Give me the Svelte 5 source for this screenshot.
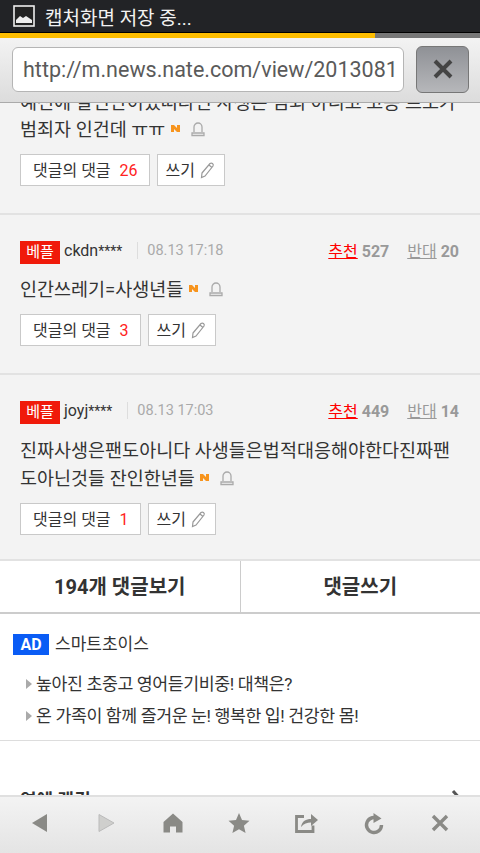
<script>
  const comments = [
    { id: 'first', lines: ['범죄자 인건데 ㅠㅠ'], replies: 26 },
    { id: 'a', best: true, user: 'ckdn', date: '08.13 17:18', up: 527, down: 20, lines: ['인간쓰레기=사생년들'], replies: 3 },
    { id: 'b', best: true, user: 'joyj', date: '08.13 17:03', up: 449, down: 14, lines: ['진짜사생은팬도아니다 사생들은법적대응해야한다진짜팬', '도아닌것들 잔인한년들'], replies: 1 }
  ];
  const ads = ['높아진 초중고 영어듣기비중! 대책은?', '온 가족이 함께 즐거운 눈! 행복한 입! 건강한 몸!'];
</script>

<div class="screen">
  <div class="status">
    <svg class="pic" width="22" height="22" viewBox="0 0 22 22">
      <rect x="1" y="1" width="20" height="20" fill="#222" stroke="#eee" stroke-width="1.6" />
      <path d="M3 18v-3l4-4 3 2 3-2 3 2 3 2v3z" fill="#eee" />
    </svg>
    <span>캡처화면 저장 중...</span>
  </div>
  <div class="progress"><div class="fill"></div></div>

  <div class="urlbar">
    <div class="url">http://m.news.nate.com/view/2013081</div>
    <div class="stop">
      <svg width="24" height="24" viewBox="0 0 24 24"><path d="M4 4l16 16M20 4L4 20" stroke="#444" stroke-width="4" /></svg>
    </div>
  </div>

  <div class="page">
    <div class="scroll">
      <p class="cut">예전에 살인난이었떠라면 사생은 범죄 아니고 고용 르노가</p>
      {#each comments as c}
        <div class="comment {c.id}">
          {#if c.best}
            <div class="head">
              <span class="best">베플</span>
              <span class="user">{c.user}<em>****</em></span>
              <span class="date">{c.date}</span>
              <span class="votes">
                <u class="up">추천</u> <b>{c.up}</b>
                <u class="down">반대</u> <b>{c.down}</b>
              </span>
            </div>
          {/if}
          <div class="body">
            {#each c.lines as line, i}
              <div>
                {line}
                {#if i === c.lines.length - 1}
                  <svg class="new" width="9" height="9" viewBox="0 0 9 9"><path d="M0 1h3l3 3V1h3v7H6L3 5v3H0z" fill="#f7941d" /></svg>
                  <svg class="bell" width="14" height="15" viewBox="0 0 14 15"><path d="M3 10V5a4 4 0 0 1 8 0v5M1 13.5h12v-2.500H1z" fill="none" stroke="#aaa" stroke-width="1.300" /></svg>
                {/if}
              </div>
            {/each}
          </div>
          <div class="btns">
            <span class="btn">댓글의 댓글 <i>{c.replies}</i></span>
            <span class="btn write">쓰기
              <svg width="16" height="18" viewBox="0 0 16 18"><path d="M2 12L10 2.500a2 2 0 0 1 3 2.500L5 15l-3.500 1.500zM9 4l3 2.500" fill="none" stroke="#999" stroke-width="1.200" /></svg>
            </span>
          </div>
        </div>
      {/each}

      <div class="tabs">
        <div>194개 댓글보기</div>
        <div>댓글쓰기</div>
      </div>

      <div class="ad">
        <div class="adhead"><span class="tag">AD</span> <span>스마트초이스</span></div>
        {#each ads as a}
          <div class="adrow"><span class="tri"></span>{a}</div>
        {/each}
      </div>

      <div class="rank">
        <span>연예 랭킹</span>
        <svg width="16" height="26" viewBox="0 0 16 26"><path d="M3 2l10 11L3 24" fill="none" stroke="#555" stroke-width="3" /></svg>
      </div>
    </div>
  </div>

  <div class="toolbar">
    <svg width="24" height="24" viewBox="0 0 24 24"><path d="M19 3v18L4 12z" fill="#8a8a86" /></svg>
    <svg width="24" height="24" viewBox="0 0 24 24"><path d="M5 3.500v17L20 12z" fill="#cfcfcd" stroke="#bbb" /></svg>
    <svg width="24" height="24" viewBox="0 0 24 24"><path d="M12 2.500l9.500 8.500v10.500H15v-6H9v6H2.500V11z" fill="#8a8a86" /></svg>
    <svg width="24" height="24" viewBox="0 0 24 24"><path d="M12 2l3 7 7.500.700-5.600 5 1.700 7.300L12 18.200 5.400 22l1.700-7.300-5.600-5L9 9z" fill="#8a8a86" /></svg>
    <svg width="26" height="24" viewBox="0 0 26 24"><path d="M11 5.500H3.500V20.500H20v-6" fill="none" stroke="#8a8a86" stroke-width="2.800" /><path d="M8 16c1-6 5-8 10-8V3l7 6-7 6v-3.500c-4 0-7 1-10 4.500z" fill="#8a8a86" /></svg>
    <svg width="24" height="24" viewBox="0 0 24 24"><path d="M16.500 8A7.500 7.500 0 1 0 19.500 14" fill="none" stroke="#8a8a86" stroke-width="3.400" /><path d="M11.500 2l8 5.500-8 4.500z" fill="#8a8a86" /></svg>
    <svg width="24" height="24" viewBox="0 0 24 24"><path d="M5 5l14 14M19 5L5 19" stroke="#8a8a86" stroke-width="3.400" /></svg>
  </div>
</div>

<style>
  :global(body) {
    margin: 0;
    background: #fff;
  }
  .screen {
    width: 480px;
    height: 853px;
    display: flex;
    flex-direction: column;
    overflow: hidden;
    font-family: Roboto, "Noto Sans CJK KR", sans-serif;
    color: #333;
  }
  .status {
    height: 32px;
    flex: none;
    background: #222326;
    color: #f2f2f2;
    display: flex;
    align-items: center;
    gap: 10px;
    padding-left: 13px;
    font-size: 19px;
  }
  .progress {
    height: 6px;
    flex: none;
    background: #777;
    border-top: 1px solid #000;
    box-sizing: border-box;
  }
  .fill {
    width: 375px;
    height: 100%;
    background: #fdbd00;
  }
  .urlbar {
    height: 65px;
    flex: none;
    box-sizing: border-box;
    background: linear-gradient(#f3f3f3, #dcdcdc);
    border-bottom: 1px solid #aaa;
    display: flex;
    align-items: center;
    gap: 12px;
    padding: 0 24px 2px 12px;
  }
  .url {
    width: 392px;
    height: 45px;
    box-sizing: border-box;
    background: #fff;
    border: 1px solid #b5b5b5;
    border-radius: 6px;
    font-size: 21.500px;
    line-height: 43px;
    padding-left: 10px;
    color: #5a5a5a;
    white-space: nowrap;
    overflow: hidden;
  }
  .stop {
    width: 53px;
    height: 47px;
    flex: none;
    box-sizing: border-box;
    margin-right: -24px;
    border: 1px solid #777;
    border-radius: 6px;
    background: linear-gradient(#8f9196, #b6b7ba);
    display: flex;
    align-items: center;
    justify-content: center;
  }
  .page {
    flex: 1;
    min-height: 0;
    overflow: hidden;
    background: #fff;
  }
  .scroll {
    margin-top: -14px;
  }
  .cut {
    margin: 0;
    padding: 0 20px;
    height: 27px;
    line-height: 28px;
    font-size: 18.500px;
    background: #f3f3f3;
    white-space: nowrap;
    overflow: hidden;
  }
  .comment {
    background: #f3f3f3;
    border-bottom: 2px solid #e2e2e2;
    padding: 0 20px;
  }
  .comment.first {
    height: 97px;
  }
  .comment.a {
    height: 158px;
  }
  .comment.b {
    height: 184px;
  }
  .head {
    display: flex;
    align-items: center;
    height: 24px;
    padding-top: 23px;
    font-size: 16px;
  }
  .best {
    width: 40px;
    height: 23px;
    margin-top: 5px;
    background: #f01a0a;
    color: #fff;
    font-size: 15px;
    line-height: 23px;
    text-align: center;
    flex: none;
  }
  .user {
    margin-left: 4px;
    color: #333;
    font-size: 16px;
  }
  .user em {
    font-style: normal;
    font-size: 14px;
  }
  .date {
    margin-left: 15px;
    padding-left: 9px;
    border-left: 1px solid #ddd;
    color: #aaa;
    font-size: 14.500px;
  }
  .votes {
    margin-left: auto;
    margin-right: 1px;
    color: #999;
    font-size: 16px;
    white-space: nowrap;
  }
  .votes b {
    font-weight: 700;
    color: #999;
  }
  .up {
    color: #f00;
  }
  .down {
    margin-left: 14px;
    color: #999;
  }
  .body {
    font-size: 18.500px;
    line-height: 28px;
    color: #333;
  }
  .a .body {
    padding-top: 14px;
  }
  .b .body {
    padding-top: 15px;
  }
  .new {
    margin-left: 1px;
    vertical-align: 3px;
  }
  .bell {
    margin-left: 11px;
    vertical-align: -1px;
  }
  .btns {
    display: flex;
    gap: 7px;
    margin-top: 10px;
  }
  .btn {
    height: 32px;
    box-sizing: border-box;
    border: 1px solid #c9c9c9;
    background: #fff;
    padding: 0 11px 0 12px;
    font-size: 16px;
    line-height: 31px;
    color: #333;
    display: inline-flex;
    align-items: center;
    gap: 6px;
    flex: none;
  }
  .btn i {
    font-style: normal;
    color: #f22;
    margin-left: 3px;
  }
  .write {
    padding: 0 8px;
    gap: 5px;
  }
  .tabs {
    display: flex;
    height: 53px;
    background: #fff;
    border-bottom: 2px solid #ccc;
    box-sizing: border-box;
  }
  .tabs div {
    flex: 1;
    text-align: center;
    font-size: 20px;
    font-weight: 700;
    line-height: 52px;
    color: #333;
  }
  .tabs div:first-child {
    border-right: 1px solid #ccc;
  }
  .ad {
    height: 127px;
    box-sizing: border-box;
    padding: 19px 13px 0;
    border-bottom: 1px solid #ddd;
    background: #fff;
  }
  .adhead {
    display: flex;
    align-items: center;
    gap: 6px;
    font-size: 17px;
    line-height: 22px;
    margin-bottom: 13px;
  }
  .tag {
    width: 36px;
    height: 21px;
    background: #0a5cf5;
    color: #fff;
    font-weight: 700;
    font-size: 16px;
    line-height: 21px;
    text-align: center;
  }
  .adrow {
    position: relative;
    padding-left: 23px;
    font-size: 17.300px;
    line-height: 32px;
    color: #333;
    white-space: nowrap;
    letter-spacing: -0.400px;
  }
  .tri {
    position: absolute;
    left: 13px;
    top: 11px;
    border-left: 6px solid #aaa;
    border-top: 5px solid transparent;
    border-bottom: 5px solid transparent;
  }
  .rank {
    display: flex;
    justify-content: space-between;
    align-items: flex-start;
    padding: 45px 20px 0;
    font-size: 18px;
    font-weight: 700;
    background: #fff;
  }
  .rank svg {
    margin-right: -6px;
    margin-top: 3px;
  }
  .toolbar {
    height: 58px;
    flex: none;
    box-sizing: border-box;
    border-top: 2px solid #e0e0e0;
    background: linear-gradient(#f3f3f3, #e4e4e4);
    display: flex;
    justify-content: space-between;
    align-items: center;
    padding: 0 28px 4px;
  }
</style>
